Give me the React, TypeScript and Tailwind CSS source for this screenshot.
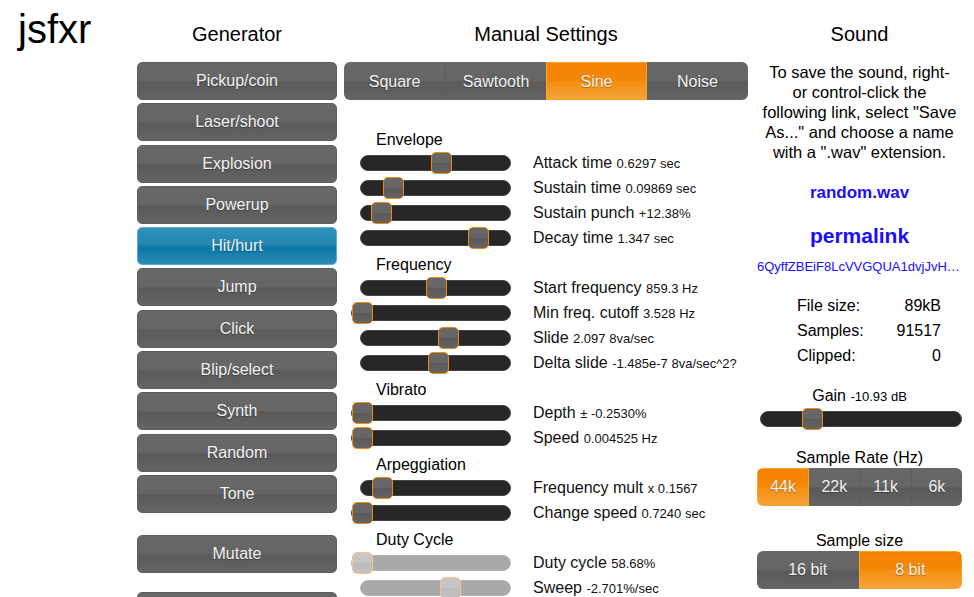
import React from 'react';

const greyBg =
  'bg-[linear-gradient(to_bottom,#686868_0%,#656565_50%,#5a5a5a_52%,#646464_100%)]';
const orangeBg =
  'bg-[linear-gradient(to_bottom,#f48200_0%,#f58806_50%,#f58f10_52%,#f6a43a_100%)]';
const blueBg =
  'bg-[linear-gradient(to_bottom,#2f91b9_0%,#2387b2_45%,#0b76a6_55%,#2b8bb7_100%)]';
const btnText = 'text-[#f2f2f2] text-[16px] leading-[20px] [text-shadow:0_1px_1px_rgba(0,0,0,0.35)]';

const generators = [
  'Pickup/coin',
  'Laser/shoot',
  'Explosion',
  'Powerup',
  'Hit/hurt',
  'Jump',
  'Click',
  'Blip/select',
  'Synth',
  'Random',
  'Tone',
];

interface Row {
  label: string;
  value: string;
  x?: number; // thumb offset in px, undefined = at zero
}

interface Group {
  title: string;
  disabled?: boolean;
  rows: Row[];
}

const groups: Group[] = [
  {
    title: 'Envelope',
    rows: [
      { label: 'Attack time', value: '0.6297 sec', x: 70 },
      { label: 'Sustain time', value: '0.09869 sec', x: 22 },
      { label: 'Sustain punch', value: '+12.38%', x: 10 },
      { label: 'Decay time', value: '1.347 sec', x: 107 },
    ],
  },
  {
    title: 'Frequency',
    rows: [
      { label: 'Start frequency', value: '859.3 Hz', x: 65 },
      { label: 'Min freq. cutoff', value: '3.528 Hz' },
      { label: 'Slide', value: '2.097 8va/sec', x: 77 },
      { label: 'Delta slide', value: '-1.485e-7 8va/sec^2?', x: 67 },
    ],
  },
  {
    title: 'Vibrato',
    rows: [
      { label: 'Depth', value: '± -0.2530%' },
      { label: 'Speed', value: '0.004525 Hz' },
    ],
  },
  {
    title: 'Arpeggiation',
    rows: [
      { label: 'Frequency mult', value: 'x 0.1567', x: 11 },
      { label: 'Change speed', value: '0.7240 sec' },
    ],
  },
  {
    title: 'Duty Cycle',
    disabled: true,
    rows: [
      { label: 'Duty cycle', value: '58.68%' },
      { label: 'Sweep', value: '-2.701%/sec', x: 79 },
    ],
  },
];

const Slider: React.FC<{ x?: number; disabled?: boolean; width: number }> = ({ x, disabled, width }) => {
  const zero = x === undefined;
  return (
    <div
      className={`relative h-[16px] rounded-full border ${
        disabled ? 'bg-[#a9a9a9] border-[#b5b5b5]' : 'bg-[#272727] border-[#444]'
      }`}
      style={{ width: zero ? width + 9 : width }}
    >
      <div
        className={`absolute top-[-4px] h-[22px] w-[21px] rounded-[5px] border ${
          disabled
            ? 'bg-[linear-gradient(to_bottom,#c8c8c8_0%,#c4c4c4_50%,#bcbcbc_52%,#c2c2c2_100%)] border-[#f6c58c]'
            : `${greyBg} border-[#ef8a0a]`
        }`}
        style={{ left: zero ? 0 : x }}
      />
    </div>
  );
};

const GenButton: React.FC<{ label: string; active?: boolean; className?: string }> = ({
  label,
  active,
  className = '',
}) => (
  <div
    className={`h-[38px] w-[200px] rounded-[5px] border flex items-center justify-center ${btnText} ${
      active ? `${blueBg} border-[#56acd2]` : `${greyBg} border-[#5e5e5e]`
    } ${className}`}
  >
    {label}
  </div>
);

export default function App() {
  return (
    <div className="flex min-h-screen bg-white text-black font-['Liberation_Sans',Arial,sans-serif]">
      {/* title */}
      <div className="w-[137px] pl-[18px] pt-[6px]">
        <h1 className="text-[40px] leading-[46px]">jsfxr</h1>
      </div>

      {/* generator */}
      <div className="w-[200px] flex flex-col">
        <h2 className="mt-[22px] text-[20px] leading-[24px] text-center">Generator</h2>
        <div className="mt-[16px] flex flex-col gap-[3.3px]">
          {generators.map((g) => (
            <GenButton key={g} label={g} active={g === 'Hit/hurt'} />
          ))}
        </div>
        <GenButton label="Mutate" className="mt-[22px]" />
        <GenButton label="Play" className="mt-[19px]" />
      </div>

      {/* manual settings */}
      <div className="ml-[7px] w-[404px] flex flex-col">
        <h2 className="mt-[22px] text-[20px] leading-[24px] text-center">Manual Settings</h2>
        <div className="mt-[16px] flex h-[38px] rounded-[6px] overflow-hidden">
          {['Square', 'Sawtooth', 'Sine', 'Noise'].map((t, i) => (
            <div
              key={t}
              className={`w-[101px] flex items-center justify-center pt-[1px] ${btnText} ${
                t === 'Sine'
                  ? `${orangeBg} border border-[#f7a726]`
                  : `${greyBg} ${i === 1 ? 'border-l border-[#5c5c5c]' : ''}`
              }`}
            >
              {t}
            </div>
          ))}
        </div>

        <div className="mt-[25px] flex flex-col">
          {groups.map((g) => (
            <div key={g.title} className="flex flex-col">
              <div className="h-[25px] pt-[4px] pl-[32px] text-[16px] leading-[21px]">{g.title}</div>
              {g.rows.map((r) => (
                <div key={r.label} className="h-[25px] flex items-center">
                  <div className="w-[167px] flex justify-end">
                    <Slider x={r.x} disabled={g.disabled} width={151} />
                  </div>
                  <div className="ml-[22px] pt-[1px] text-[16px] leading-[20px] text-[#111] whitespace-nowrap">
                    {r.label} <span className="text-[13px]">{r.value}</span>
                  </div>
                </div>
              ))}
            </div>
          ))}
        </div>
      </div>

      {/* sound */}
      <div className="ml-[9px] w-[205px] flex flex-col text-center">
        <h2 className="mt-[22px] text-[20px] leading-[24px]">Sound</h2>
        <p className="mt-[16px] text-[16.5px] leading-[20px] px-[3px]">
          To save the sound, right- or control-click the following link, select "Save As..." and choose a name
          with a ".wav" extension.
        </p>
        <a className="mt-[21px] text-[17px] leading-[20px] font-bold text-[#1a0dff]">random.wav</a>
        <a className="mt-[21px] text-[21px] leading-[24px] font-bold text-[#1a0dff]">permalink</a>
        <a className="mt-[11px] text-[13px] leading-[16px] text-[#1a0dff] truncate">
          6QyffZBEiF8LcVVGQUA1dvjJvHnP2Kqk8WzXe
        </a>

        <div className="mt-[18px] ml-[40px] mr-[21px] flex flex-col text-[16px] leading-[25px]">
          <div className="flex justify-between">
            <span>File size:</span>
            <span>89kB</span>
          </div>
          <div className="flex justify-between">
            <span>Samples:</span>
            <span>91517</span>
          </div>
          <div className="flex justify-between">
            <span>Clipped:</span>
            <span>0</span>
          </div>
        </div>

        <div className="mt-[18px] text-[16px] leading-[20px]">
          Gain <span className="text-[13px]">-10.93 dB</span>
        </div>
        <div className="mt-[4px] ml-[3px]">
          <Slider x={41} width={202} />
        </div>

        <div className="mt-[21px] text-[16px] leading-[20px]">Sample Rate (Hz)</div>
        <div className="flex h-[38px] rounded-[6px] overflow-hidden">
          {['44k', '22k', '11k', '6k'].map((t, i) => (
            <div
              key={t}
              className={`flex-1 flex items-center justify-center ${btnText} ${
                i === 0 ? `${orangeBg} border border-[#f7a726]` : `${greyBg} ${i > 1 ? 'border-l border-[#5c5c5c]' : ''}`
              }`}
            >
              {t}
            </div>
          ))}
        </div>

        <div className="mt-[25px] text-[16px] leading-[20px]">Sample size</div>
        <div className="flex h-[38px] rounded-[6px] overflow-hidden">
          <div className={`flex-1 flex items-center justify-center ${btnText} ${greyBg}`}>16 bit</div>
          <div className={`flex-1 flex items-center justify-center ${btnText} ${orangeBg} border border-[#f7a726]`}>
            8 bit
          </div>
        </div>
      </div>
    </div>
  );
}
